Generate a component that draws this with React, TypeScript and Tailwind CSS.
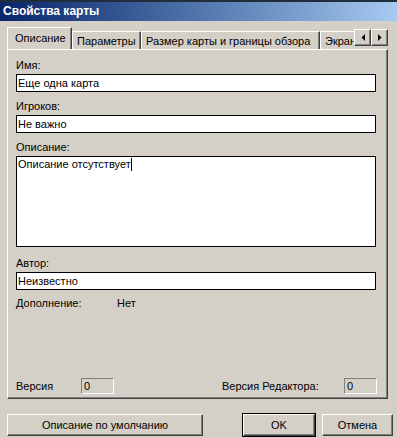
import React from 'react';

const font = "font-['Liberation_Sans',Arial,sans-serif]";

const Field = ({ value }: { value: string }) => (
  <div className="w-[360px] h-[18px] bg-white border border-black pl-[1px] flex items-center text-black leading-[13px]">
    {value}
  </div>
);

const Label = ({ children, className = '' }: { children: React.ReactNode; className?: string }) => (
  <div className={`h-[13px] leading-[13px] text-black ${className}`}>{children}</div>
);

const Sunken = ({ value }: { value: string }) => (
  <div className="w-[33px] h-[16px] border-t border-l border-[#808080] border-r-white border-b-white border-r border-b pl-[2px] leading-[14px] text-black">
    {value}
  </div>
);

const Button = ({ children, className = '' }: { children: React.ReactNode; className?: string }) => (
  <div
    className={`h-[22px] bg-[#d4d0c8] border-t border-l border-white border-r border-b border-r-[#404040] border-b-[#404040] shadow-[inset_-1px_-1px_0_#808080] flex items-center justify-center text-black ${className}`}
  >
    {children}
  </div>
);

const Tab = ({ label, width, active = false }: { label: string; width: number; active?: boolean }) => (
  <div
    className={
      active
        ? 'relative z-10 h-[23px] -mb-[1px] shrink-0 bg-[#d4d0c8] border-t border-l border-white border-r border-r-[#404040] shadow-[inset_-1px_0_0_#808080] pl-[7px] pt-[4px] leading-[13px] text-black'
        : 'h-[18px] shrink-0 bg-[#d4d0c8] border-t border-l border-white border-r border-r-[#404040] shadow-[inset_-1px_0_0_#808080] pl-[4px] pt-[3px] leading-[13px] text-black whitespace-nowrap overflow-hidden'
    }
    style={{ width }}
  >
    {label}
  </div>
);

const ArrowButton = ({ dir }: { dir: 'left' | 'right' }) => (
  <div className="w-[17px] h-[17px] bg-[#d4d0c8] border-t border-l border-white border-r border-b border-r-[#404040] border-b-[#404040] shadow-[inset_-1px_-1px_0_#808080] flex items-center justify-center">
    <svg width="4" height="7" viewBox="0 0 4 7">
      {dir === 'left' ? <polygon points="4,0 4,7 0.5,3.5" fill="#000" /> : <polygon points="0,0 0,7 3.5,3.5" fill="#000" />}
    </svg>
  </div>
);

export default function App() {
  return (
    <div className={`w-[397px] h-[438px] bg-[#d4d0c8] flex flex-col text-[11px] ${font} overflow-hidden`}>
      {/* Title bar */}
      <div className="h-[21px] border-t-2 border-[#1e2e3a] bg-gradient-to-r from-[#0a246a] to-[#a6caf0] pl-[3px] flex items-center">
        <span className="text-white font-bold text-[12px] leading-[13px]">Свойства карты</span>
      </div>

      <div className="px-[7px] pt-[6px] flex flex-col">
        {/* Tabs */}
        <div className="flex items-end h-[22px] w-[381px]">
          <div className="flex items-end w-[347px] overflow-hidden">
            <Tab label="Описание" width={65} active />
            <Tab label="Параметры" width={69} />
            <Tab label="Размер карты и границы обзора" width={179} />
            <Tab label="Экран" width={60} />
          </div>
          <div className="flex self-start mt-[2px]">
            <ArrowButton dir="left" />
            <ArrowButton dir="right" />
          </div>
        </div>

        {/* Panel */}
        <div className="w-[381px] h-[350px] border-t border-l border-white border-r border-b border-r-[#404040] border-b-[#404040] shadow-[inset_-1px_-1px_0_#808080] pl-[8px] pt-[9px] pb-[4px] flex flex-col">
          <Label>Имя:</Label>
          <div className="mt-[2px]">
            <Field value="Еще одна карта" />
          </div>
          <Label className="mt-[8px]">Игроков:</Label>
          <div className="mt-[2px]">
            <Field value="Не важно" />
          </div>
          <Label className="mt-[8px]">Описание:</Label>
          <div className="mt-[2px] w-[360px] h-[91px] bg-white border border-black pl-[1px] pt-[1px] leading-[13px] text-black flex items-start">
            <span>Описание отсутствует</span>
            <span className="inline-block w-[1px] h-[13px] bg-black" />
          </div>
          <Label className="mt-[10px]">Автор:</Label>
          <div className="mt-[2px]">
            <Field value="Неизвестно" />
          </div>
          <div className="mt-[7px] flex h-[13px] leading-[13px] text-black">
            <span className="w-[101px]">Дополнение:</span>
            <span>Нет</span>
          </div>

          <div className="mt-auto flex items-center justify-between w-[361px]">
            <div className="flex items-center">
              <span className="w-[65px] text-black">Версия</span>
              <Sunken value="0" />
            </div>
            <div className="flex items-center">
              <span className="w-[122px] text-black">Версия Редактора:</span>
              <Sunken value="0" />
            </div>
          </div>
        </div>
      </div>

      {/* Buttons */}
      <div className="flex items-center pl-[7px] mt-[14px]">
        <Button className="w-[196px]">Описание по умолчанию</Button>
        <div className="ml-[39px] border border-black">
          <Button className="w-[72px]">OK</Button>
        </div>
        <Button className="w-[71px] ml-[6px]">Отмена</Button>
      </div>
    </div>
  );
}
